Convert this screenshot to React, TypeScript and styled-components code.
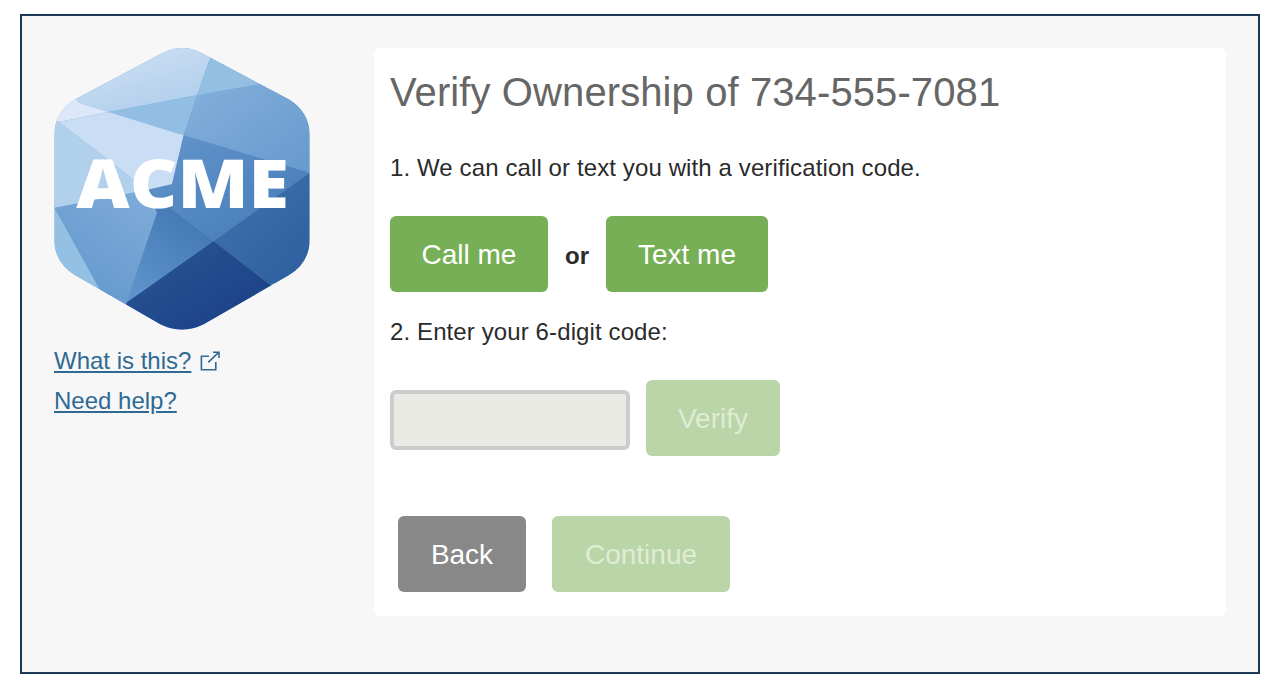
import React from 'react';
import styled, { createGlobalStyle } from 'styled-components';

const GlobalStyle = createGlobalStyle`
  html, body {
    margin: 0;
    padding: 0;
    background: #fff;
    font-family: "Liberation Sans", Arial, sans-serif;
  }
`;

const Frame = styled.div`
  box-sizing: border-box;
  width: 1240px;
  height: 660px;
  margin: 14px 20px 0;
  padding: 32px 32px 0;
  display: flex;
  background: #f7f7f7;
  border: 2px solid #1c3a57;
`;

const Sidebar = styled.aside`
  width: 320px;
  flex: none;
`;

const LogoSvg = styled.svg`
  display: block;
  width: 256px;
  height: 282px;
  margin-bottom: 16px;
`;

const LinkRow = styled.div`
  display: flex;
  align-items: flex-start;
  gap: 8px;
  height: 40px;
`;

const SideLink = styled.a`
  font-size: 24px;
  line-height: 30px;
  color: #2f6a94;
  text-decoration: underline;
  text-underline-offset: 2px;
`;

const OpenIcon = styled.svg`
  display: block;
  width: 21px;
  height: 21px;
  margin-top: 5px;
  fill: none;
  stroke: #2f6a94;
  stroke-width: 1.6;
`;

const Panel = styled.main`
  box-sizing: border-box;
  width: 852px;
  height: 568px;
  padding: 20px 16px 0;
  background: #fff;
  border-radius: 6px;
`;

const Title = styled.h1`
  margin: 0 0 36px;
  font-size: 40px;
  line-height: 48px;
  font-weight: 400;
  letter-spacing: 0.1px;
  color: #666;
`;

const Step = styled.p<{ $after: number }>`
  margin: 0 0 ${(p) => p.$after}px;
  font-size: 24px;
  line-height: 32px;
  letter-spacing: 0.11px;
  color: #2b2b2b;
`;

const Row = styled.div<{ $gap: number; $inset?: number; $after?: number }>`
  display: flex;
  align-items: center;
  gap: ${(p) => p.$gap}px;
  padding-left: ${(p) => p.$inset ?? 0}px;
  margin-bottom: ${(p) => p.$after ?? 0}px;
`;

const Button = styled.button<{ $tone: 'green' | 'gray'; $width: number }>`
  width: ${(p) => p.$width}px;
  height: 76px;
  padding: 2px 0 0;
  border: 0;
  border-radius: 6px;
  font-family: inherit;
  font-size: 28px;
  color: #fff;
  background: ${(p) => (p.$tone === 'green' ? '#76af55' : '#888888')};

  &:disabled {
    background: #bad6a8;
    color: #dfecd6;
  }
`;

const OrLabel = styled.b`
  width: 26px;
  padding-top: 4px;
  text-align: center;
  font-size: 24px;
  color: #2b2b2b;
`;

const CodeInput = styled.input`
  box-sizing: border-box;
  width: 240px;
  height: 60px;
  margin-top: 4px;
  border: 4px solid #cccccc;
  border-radius: 6px;
  background: #eaeae4;
`;

function Logo() {
  return (
    <LogoSvg viewBox="42 36 766 846" role="img" aria-label="ACME">
      <defs>
        <clipPath id="hex">
          <path d="M365 52 Q425 20 485 52 L745 190 Q808 228 808 300 L808 610 Q808 680 745 718 L490 865 Q425 897 360 865 L105 718 Q42 680 42 610 L42 300 Q42 228 105 190 Z" />
        </clipPath>
        <linearGradient id="top" x1="0.2" y1="0" x2="0.8" y2="1">
          <stop offset="0" stopColor="#d3e3f5" />
          <stop offset="1" stopColor="#aecdeb" />
        </linearGradient>
        <linearGradient id="right" x1="0" y1="0" x2="1" y2="1">
          <stop offset="0" stopColor="#85b1dc" />
          <stop offset="1" stopColor="#6598cc" />
        </linearGradient>
        <linearGradient id="mid" x1="0" y1="0" x2="1" y2="1">
          <stop offset="0" stopColor="#6495cb" />
          <stop offset="1" stopColor="#437ab6" />
        </linearGradient>
        <linearGradient id="lower" x1="0.8" y1="0" x2="0.2" y2="1">
          <stop offset="0" stopColor="#3e72ae" />
          <stop offset="1" stopColor="#5e94cb" />
        </linearGradient>
        <linearGradient id="side" x1="0" y1="0" x2="1" y2="1">
          <stop offset="0" stopColor="#4175b0" />
          <stop offset="1" stopColor="#2c5c9c" />
        </linearGradient>
        <linearGradient id="base" x1="0" y1="0" x2="1" y2="1">
          <stop offset="0" stopColor="#2a5796" />
          <stop offset="1" stopColor="#173a83" />
        </linearGradient>
        <linearGradient id="leftLow" x1="0.8" y1="0" x2="0.2" y2="1">
          <stop offset="0" stopColor="#7eabd8" />
          <stop offset="1" stopColor="#6196cc" />
        </linearGradient>
      </defs>
      <g clipPath="url(#hex)">
        <rect x="0" y="0" width="870" height="930" fill="#6fa1d2" />
        <polygon points="115,200 80,150 425,0 530,20 510,65 470,178 205,228" fill="url(#top)" />
        <polygon points="510,65 530,20 720,120 640,148 470,178" fill="#93bfe3" />
        <polygon points="205,228 470,178 430,298" fill="#93bee3" />
        <polygon points="640,148 720,120 840,200 840,420 808,410 430,298 470,178" fill="url(#right)" />
        <polygon points="20,240 80,150 115,200 205,228 55,258" fill="#dce8f9" />
        <polygon points="55,258 205,228 430,298 395,445 320,462" fill="#c9ddf4" />
        <polygon points="20,240 55,258 320,462 20,522" fill="#b1d0ec" />
        <polygon points="320,462 395,445 350,530" fill="#8db9e0" />
        <polygon points="430,298 808,410 520,615 320,462 395,445" fill="url(#mid)" />
        <polygon points="42,515 320,462 350,530 258,800 258,830 175,790 175,755" fill="url(#leftLow)" />
        <polygon points="42,515 175,755 175,800 100,780 20,700 20,520" fill="#94c0e4" />
        <polygon points="350,530 320,462 520,615 258,800" fill="url(#lower)" />
        <polygon points="520,615 808,410 840,400 840,720 688,745" fill="url(#side)" />
        <polygon points="258,800 258,850 300,900 425,920 560,920 760,760 688,745 520,615" fill="url(#base)" />
      </g>
      <text
        x="108"
        y="517"
        fontFamily="'Open Sans', 'Liberation Sans', sans-serif"
        fontWeight="800"
        fontSize="200"
        fill="#ffffff"
        textLength="638"
        lengthAdjust="spacingAndGlyphs"
      >
        ACME
      </text>
    </LogoSvg>
  );
}

export default function App() {
  return (
    <>
      <GlobalStyle />
      <Frame>
        <Sidebar>
          <Logo />
          <LinkRow>
            <SideLink href="#">What is this?</SideLink>
            <OpenIcon viewBox="0 0 21 21" aria-hidden="true">
              <path d="M10 5.2H2.4V18.8H16.8V11" />
              <path d="M9.2 11.4L19.4 1.6" />
              <path d="M14 1.2H20V7" />
            </OpenIcon>
          </LinkRow>
          <LinkRow>
            <SideLink href="#">Need help?</SideLink>
          </LinkRow>
        </Sidebar>
        <Panel>
          <Title>Verify Ownership of 734-555-7081</Title>
          <Step $after={32}>1. We can call or text you with a verification code.</Step>
          <Row $gap={16} $after={24}>
            <Button $tone="green" $width={158}>Call me</Button>
            <OrLabel>or</OrLabel>
            <Button $tone="green" $width={162}>Text me</Button>
          </Row>
          <Step $after={32}>2. Enter your 6-digit code:</Step>
          <Row $gap={16} $after={60}>
            <CodeInput disabled />
            <Button $tone="green" $width={134} disabled>Verify</Button>
          </Row>
          <Row $gap={26} $inset={8}>
            <Button $tone="gray" $width={128}>Back</Button>
            <Button $tone="green" $width={178} disabled>Continue</Button>
          </Row>
        </Panel>
      </Frame>
    </>
  );
}
